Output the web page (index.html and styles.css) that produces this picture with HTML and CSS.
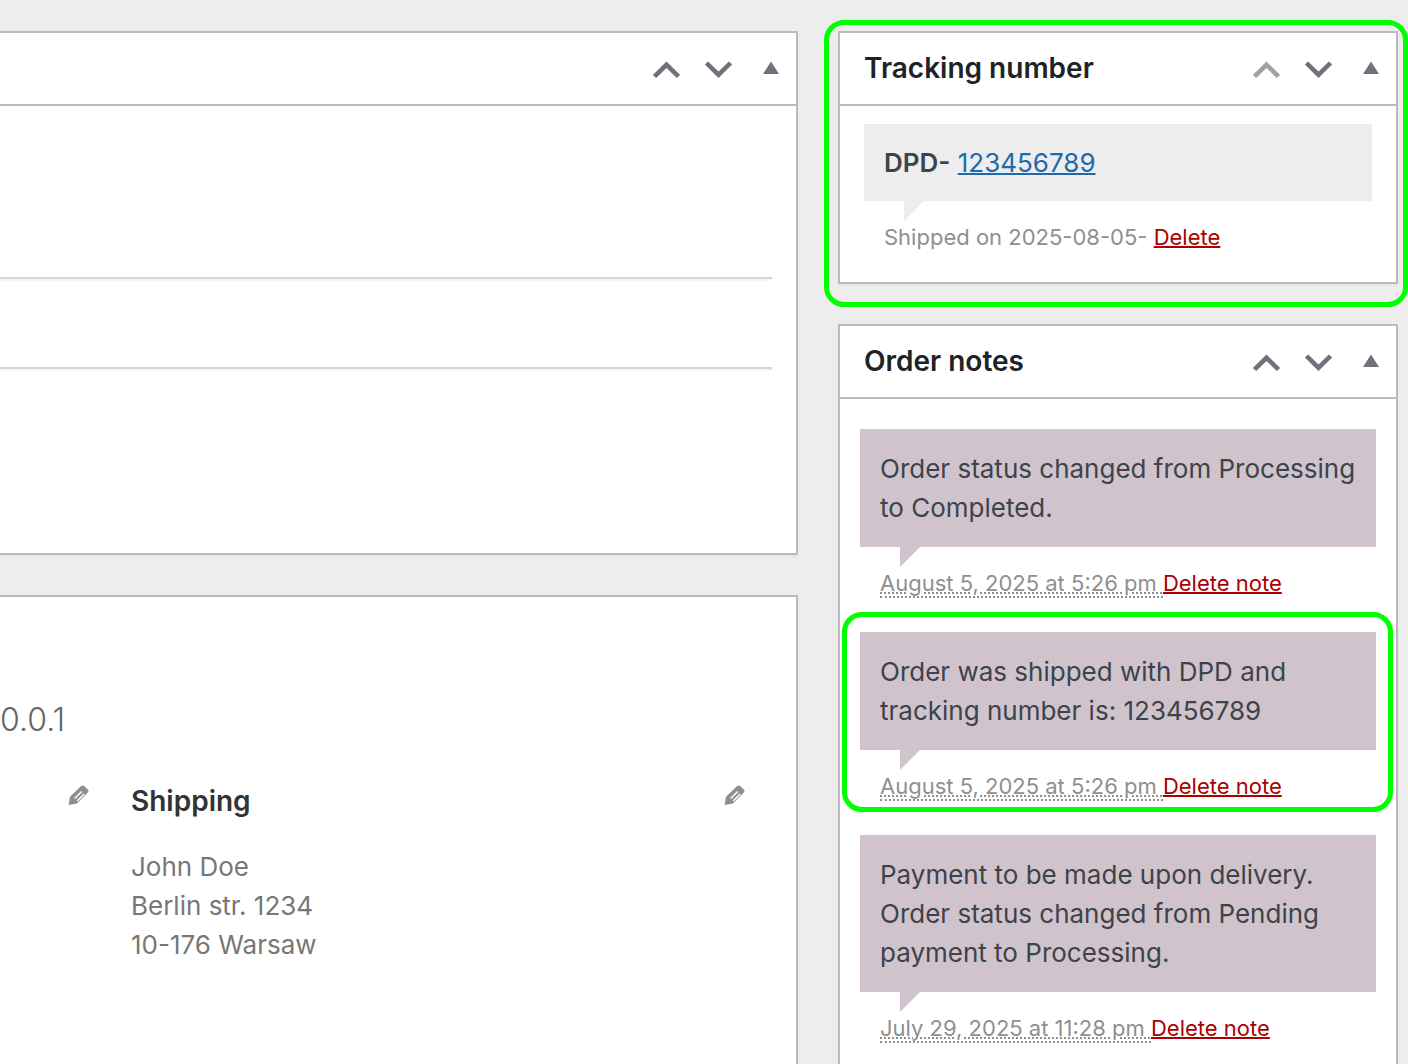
FILE: index.html
```html
<!DOCTYPE html>
<html lang="en">
<head>
    <meta charset="UTF-8">
    <meta name="viewport" content="width=device-width, initial-scale=1.0">
    <title>Edit order</title>
    <link rel="stylesheet" href="styles.css">
</head>
<body>
    <!-- Shared icons -->
    <svg class="sprite" aria-hidden="true">
        <symbol id="icon-up" viewBox="0 0 52 71"><path d="M26.5 28.6L40.2 42L36.8 45L26.5 35L16.2 45L12.8 42Z"/></symbol>
        <symbol id="icon-down" viewBox="0 0 52 71"><path d="M26.5 45L12.8 31.6L16.2 28.6L26.5 38.6L36.8 28.6L40.2 31.6Z"/></symbol>
        <symbol id="icon-toggle" viewBox="0 0 52 71"><path d="M27 28.6L35 41H19Z"/></symbol>
        <symbol id="icon-pencil" viewBox="0 0 21 21"><path fill-rule="evenodd" d="M0.5 20L2 11.8L12.6 1.4Q14.4 -0.2 16.2 1L20 4.8Q21 6.2 19.8 7.6L9 18.4ZM6.2 13L7.2 14L14.2 7L13.2 6ZM8.6 15.4L9.6 16.4L16.6 9.4L15.6 8.4Z"/></symbol>
    </svg>

    <div class="columns">
        <main class="main">
            <section class="panel panel-items">
                <header class="panel-header">
                    <div class="panel-actions">
                        <button type="button" aria-label="Move up"><svg><use href="#icon-up"/></svg></button>
                        <button type="button" aria-label="Move down"><svg><use href="#icon-down"/></svg></button>
                        <button type="button" aria-label="Toggle panel"><svg><use href="#icon-toggle"/></svg></button>
                    </div>
                </header>
                <div class="item-rows">
                    <div class="item-row item-row-large"></div>
                    <div class="item-row"></div>
                </div>
            </section>

            <section class="panel panel-order">
                <p class="order-ip">0.0.1</p>
                <div class="addresses">
                    <div class="address-column">
                        <a href="#" class="edit" aria-label="Edit billing"><svg><use href="#icon-pencil"/></svg></a>
                    </div>
                    <div class="address-column">
                        <h3>Shipping</h3>
                        <a href="#" class="edit" aria-label="Edit shipping"><svg><use href="#icon-pencil"/></svg></a>
                        <address>John Doe<br>Berlin str. 1234<br>10-176 Warsaw</address>
                    </div>
                </div>
            </section>
        </main>

        <aside class="side">
            <section class="panel panel-tracking highlight">
                <header class="panel-header">
                    <h2>Tracking number</h2>
                    <div class="panel-actions">
                        <button type="button" aria-label="Move up" disabled><svg><use href="#icon-up"/></svg></button>
                        <button type="button" aria-label="Move down"><svg><use href="#icon-down"/></svg></button>
                        <button type="button" aria-label="Toggle panel"><svg><use href="#icon-toggle"/></svg></button>
                    </div>
                </header>
                <div class="tracking">
                    <div class="note-content"><strong>DPD-</strong> <a href="#">123456789</a></div>
                    <p class="meta">Shipped on 2025-08-05- <a href="#" class="delete">Delete</a></p>
                </div>
            </section>

            <section class="panel panel-notes">
                <header class="panel-header">
                    <h2>Order notes</h2>
                    <div class="panel-actions">
                        <button type="button" aria-label="Move up"><svg><use href="#icon-up"/></svg></button>
                        <button type="button" aria-label="Move down"><svg><use href="#icon-down"/></svg></button>
                        <button type="button" aria-label="Toggle panel"><svg><use href="#icon-toggle"/></svg></button>
                    </div>
                </header>
                <ul class="notes">
                    <li>
                        <div class="note-content">Order status changed from Processing to Completed.</div>
                        <p class="meta"><abbr>August 5, 2025 at 5:26 pm </abbr><a href="#" class="delete">Delete note</a></p>
                    </li>
                    <li class="highlight">
                        <div class="note-content">Order was shipped with DPD and tracking number is: 123456789</div>
                        <p class="meta"><abbr>August 5, 2025 at 5:26 pm </abbr><a href="#" class="delete">Delete note</a></p>
                    </li>
                    <li>
                        <div class="note-content">Payment to be made upon delivery. Order status changed from Pending payment to Processing.</div>
                        <p class="meta"><abbr>July 29, 2025 at 11:28 pm </abbr><a href="#" class="delete">Delete note</a></p>
                    </li>
                </ul>
            </section>
        </aside>
    </div>
</body>
</html>
```
FILE: styles.css
```css
* {
    box-sizing: border-box;
}
body {
    margin: 0;
    background: #ededed;
    color: #3c434a;
    font-family: Inter, "Liberation Sans", sans-serif;
    font-size: 26px;
    line-height: 39px;
    overflow: hidden;
}
h2, h3, p, ul {
    margin: 0;
    padding: 0;
}
.sprite {
    display: none;
}
.columns {
    display: flex;
    gap: 40px;
    min-height: 100vh;
    padding: 31px 10px 0 0;
}
.main, .side {
    display: flex;
    flex-direction: column;
    gap: 40px;
}
.main {
    flex: 1;
    min-width: 0;
}
.side {
    flex: 0 0 560px;
}
.panel {
    position: relative;
    background: #fff;
    border: 2px solid #bbbac0;
    box-shadow: 0 2px 2px rgba(0,0,0,0.04);
}
.main .panel {
    border-left: 0;
}
.panel-order, .panel-notes {
    flex: 1;
    border-bottom: 0;
}
.panel-header {
    display: flex;
    align-items: center;
    height: 73px;
    padding-left: 24px;
    border-bottom: 2px solid #bbbac0;
}
.panel-header h2 {
    font-size: 28px;
    font-weight: 600;
    color: #1d2327;
}
.panel-actions {
    display: flex;
    margin-left: auto;
}
.panel-actions button {
    padding: 0;
    border: 0;
    background: none;
    color: #70717b;
}
.panel-actions button:disabled {
    color: #a0a3a6;
}
.panel-actions svg {
    display: block;
    width: 52px;
    height: 71px;
    fill: currentColor;
}

/* Order items */
.item-rows {
    padding: 0 24px 184px 0;
}
.item-row {
    height: 90px;
    border-bottom: 2px solid #d5d5d5;
    box-shadow: 0 2px 0 #f5f5f5;
}
.item-row-large {
    height: 173px;
}

/* Order data */
.panel-order {
    padding: 103px 51px 0 0;
}
.order-ip {
    font-size: 32px;
    font-weight: 300;
    color: #666;
}
.addresses {
    display: grid;
    grid-template-columns: 89px 1fr;
    gap: 42px;
    padding-top: 43px;
    color: #777;
}
.address-column {
    position: relative;
}
.address-column h3 {
    font-size: 28px;
    font-weight: 600;
    color: #333;
}
.address-column address {
    margin-top: 26px;
    font-style: normal;
}
.edit {
    position: absolute;
    top: 3px;
    right: 0;
    color: #8f8f8f;
}
.edit svg {
    display: block;
    width: 21px;
    height: 21px;
    fill: currentColor;
}

/* Notes */
.tracking {
    padding: 18px 24px 28px;
}
.notes {
    display: flex;
    flex-direction: column;
    gap: 32px;
    padding: 30px 20px;
    list-style: none;
}
.notes li {
    position: relative;
}
.note-content {
    position: relative;
    padding: 20px;
    background: #d0c3cc;
}
.tracking .note-content {
    padding: 19px 20px;
    background: #ededed;
}
.note-content::after {
    content: "";
    position: absolute;
    top: 100%;
    left: 40px;
    border-top: 20px solid #d0c3cc;
    border-right: 20px solid transparent;
}
.tracking .note-content::after {
    border-top-color: #ededed;
}
.note-content strong {
    font-weight: 600;
}
.note-content a {
    color: #2069ad;
    text-decoration-thickness: 2px;
}
.meta {
    padding: 19px 20px 0;
    font-size: 22px;
    line-height: 34px;
    color: #8f8f8f;
    white-space: nowrap;
}
.meta abbr {
    border-bottom: 2px dotted #8f8f8f;
    text-decoration: underline dotted 2px;
}
.meta .delete {
    color: #a00;
    text-decoration-thickness: 2px;
}
.highlight::after {
    content: "";
    position: absolute;
    inset: -20px -17px -9px -18px;
    border: 5px solid #0f0;
    border-radius: 20px;
    pointer-events: none;
}
.panel.highlight::after {
    inset: -13px -12px -25px -16px;
}
```
